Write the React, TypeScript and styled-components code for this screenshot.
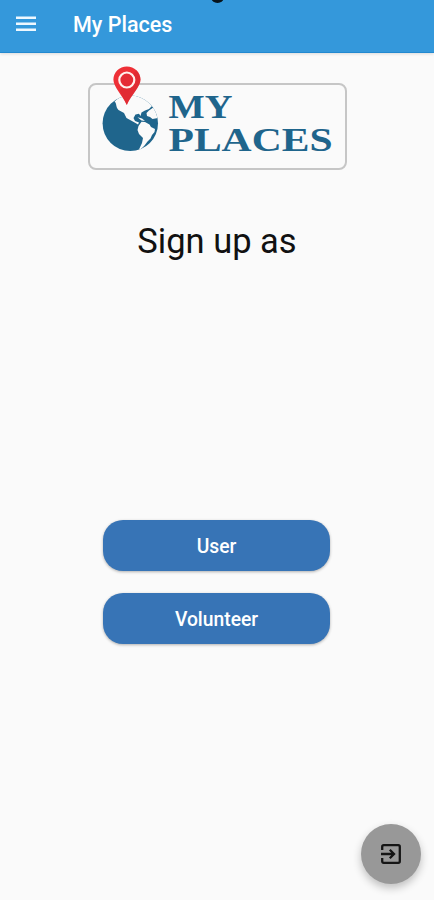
import React from "react";
import styled, { createGlobalStyle } from "styled-components";

const GlobalStyle = createGlobalStyle`
  * { box-sizing: border-box; }
  body { margin: 0; background: #fafafa; font-family: Roboto, sans-serif; }
`;

const Screen = styled.div`
  position: relative;
  display: flex;
  flex-direction: column;
  height: 900px;
  overflow: hidden;
  background: #fafafa;
`;

const AppBar = styled.header`
  position: relative;
  display: flex;
  align-items: center;
  height: 53px;
  flex: none;
  padding: 0 16px 4px;
  background: #3498db;
  border-bottom: 1px solid #2389d0;
  box-shadow: 0 1px 3px rgba(0, 0, 0, 0.13);
`;

const CameraNotch = styled.span`
  position: absolute;
  top: -9px;
  left: 211px;
  width: 13px;
  height: 12px;
  border-radius: 50%;
  background: #07131c;
`;

const MenuButton = styled.button`
  display: flex;
  width: 20px;
  margin-right: 37px;
  padding: 0;
  border: 0;
  background: none;
`;

const Title = styled.h1`
  margin: 0;
  padding-top: 2px;
  color: #fff;
  font-size: 21.5px;
  font-weight: 500;
  line-height: 28px;
`;

const Content = styled.main`
  display: flex;
  flex-direction: column;
  align-items: center;
`;

const LogoFrame = styled.div`
  display: flex;
  width: 259px;
  height: 87px;
  margin-top: 30px;
  border: 2px solid #c6c6c6;
  border-radius: 8px;
`;

const GlobeMark = styled.svg`
  flex: none;
  width: 58px;
  height: 90px;
  margin: -20px 0 0 11px;
`;

const Wordmark = styled.svg`
  flex: none;
  width: 166px;
  height: 74px;
  margin: 0 0 0 9px;
  overflow: visible;
  font-family: "Liberation Serif", serif;
  font-size: 34px;
  font-weight: 700;
  fill: #1f658c;
`;

const Heading = styled.h2`
  margin: 49px 0 0;
  color: #111;
  font-size: 34.5px;
  font-weight: 400;
  line-height: 44px;
`;

const Choices = styled.div`
  display: flex;
  flex-direction: column;
  gap: 22px;
  margin: 257px 1px 0 0;
`;

const ChoiceButton = styled.button`
  width: 227px;
  height: 51px;
  padding: 1px 0 0;
  border: 0;
  border-radius: 20px;
  background: #3774b6;
  box-shadow: 0 1px 3px rgba(0, 0, 0, 0.3);
  color: #fff;
  font: 500 19.3px Roboto, sans-serif;
`;

const ExitButton = styled.button`
  position: absolute;
  right: 13px;
  bottom: 16px;
  display: flex;
  align-items: center;
  justify-content: center;
  width: 60px;
  height: 60px;
  padding: 0;
  border: 0;
  border-radius: 50%;
  background: #989898;
  box-shadow: 0 4px 8px rgba(0, 0, 0, 0.24);
`;

function Logo() {
  return (
    <LogoFrame>
      <GlobeMark viewBox="101 65 58 90">
        <defs>
          <clipPath id="globe">
            <circle cx="130.3" cy="123.3" r="27.7" />
          </clipPath>
        </defs>
        <circle cx="130.3" cy="123.3" r="27.7" fill="#1f658c" />
        <g clipPath="url(#globe)" fill="#fafafa">
          <path d="M114.500 101.500C117 103.500 115.500 107 118.500 110L124 113L126.500 118L131 120.500L135.500 123L138 124.500L139 122.500L135 121L133.500 118L135.500 114.500L139 113.800L140.500 116L141.500 112.500L145 110.500L149 109L152 106L145 95H122Z" />
          <path d="M149 110.500L146.500 113L147 116L150 117L152.500 119L158 118L154 107Z" />
          <path d="M137.500 117.300L142 118.500L145 121L141.500 120.500Z" />
          <path d="M138.500 126L141.500 121.800L145 122L149.500 124.500L151 127L155 129L154.500 132L152 135L150.500 138.500L147.500 141.500L144.500 145.500L140 150L138.500 150.500L142 143L143 138L139 134L137.500 130Z" />
        </g>
        <path d="M126.800 66.500C119.400 66.500 113.400 72.300 113.400 79.600C113.400 87 121.800 94.500 126.800 105C131.500 94.500 140.500 87 140.500 79.600C140.500 72.300 134.300 66.500 126.800 66.500Z" fill="#ee3037" />
        <path d="M126.800 105C131.500 94.500 140.500 87 140.500 79.600C140.500 76 139 72.500 136.500 70.200L119.500 90.500Z" fill="#d42530" opacity=".5" />
        <circle cx="126.800" cy="80" r="7.500" fill="#e52b35" stroke="#fff0ed" strokeWidth="2.200" />
      </GlobeMark>
      <Wordmark viewBox="168 85 166 74">
        <text x="168.500" y="117.500" textLength="64" lengthAdjust="spacingAndGlyphs">MY</text>
        <text x="168.500" y="151" textLength="164" lengthAdjust="spacingAndGlyphs">PLACES</text>
      </Wordmark>
    </LogoFrame>
  );
}

export default function App() {
  return (
    <Screen>
      <GlobalStyle />
      <AppBar>
        <CameraNotch />
        <MenuButton aria-label="Menu">
          <svg width="20" height="16" viewBox="0 0 20 16" fill="#eef8ff">
            <path d="M0 .5h20v2.500H0zM0 6.500h20v2.500H0zM0 12.500h20v2.500H0z" />
          </svg>
        </MenuButton>
        <Title>My Places</Title>
      </AppBar>
      <Content>
        <Logo />
        <Heading>Sign up as</Heading>
        <Choices>
          <ChoiceButton>User</ChoiceButton>
          <ChoiceButton>Volunteer</ChoiceButton>
        </Choices>
      </Content>
      <ExitButton aria-label="Exit">
        <svg width="20" height="20" viewBox="0 0 20 20" fill="none" stroke="#151515" strokeWidth="2.300">
          <path d="M1.200 6V2.700Q1.200 1.200 2.700 1.200H17.300Q18.800 1.200 18.800 2.700V17.300Q18.800 18.800 17.300 18.800H2.700Q1.200 18.800 1.200 17.300V14" />
          <path d="M0 10H13M8.800 5.800L13 10L8.800 14.200" />
        </svg>
      </ExitButton>
    </Screen>
  );
}
